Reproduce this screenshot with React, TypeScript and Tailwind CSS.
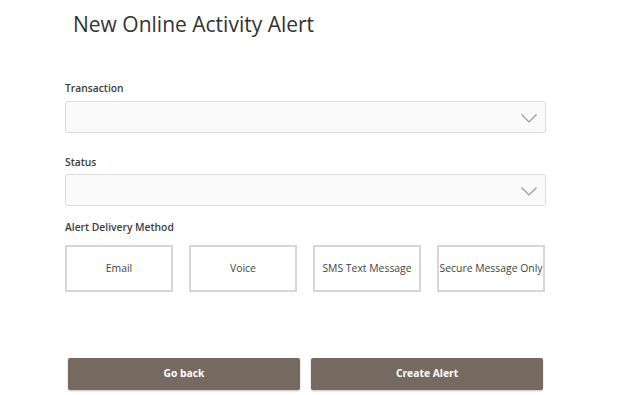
import React from "react";

const Chevron = () => (
  <svg width="16" height="9" viewBox="0 0 16 9" fill="none" className="absolute right-[8px] top-[12px]">
    <path d="M0.5 0.5 L8 8 L15.5 0.5" stroke="#9a9a9a" strokeWidth="1.2" />
  </svg>
);

const Select = () => (
  <div className="relative h-[32px] w-[481px] rounded-[3px] border border-[#dcdcdc] bg-[#fafafa]">
    <Chevron />
  </div>
);

export default function App() {
  const methods = ["Email", "Voice", "SMS Text Message", "Secure Message Only"];
  return (
    <div
      className="w-[624px] h-[395px] bg-white text-[#333]"
      style={{ fontFamily: '"Open Sans", sans-serif' }}
    >
      <div className="pl-[73px] pt-[10px] text-[21px] leading-[29px] text-[#333]">New Online Activity Alert</div>
      <div className="pl-[65px] pt-[42px] flex flex-col">
        <div className="text-[10.3px] font-semibold leading-[15px] text-[#3c3c3c]">Transaction</div>
        <div className="mt-[5px]">
          <Select />
        </div>
        <div className="mt-[22px] text-[10.3px] font-semibold leading-[15px] text-[#3c3c3c]">Status</div>
        <div className="mt-[4px]">
          <Select />
        </div>
        <div className="mt-[14px] text-[10.3px] font-semibold leading-[15px] text-[#3c3c3c]">Alert Delivery Method</div>
        <div className="mt-[10px] flex gap-[16px]">
          {methods.map((m) => (
            <div
              key={m}
              className="flex h-[47px] w-[108px] shrink-0 items-center justify-center whitespace-nowrap border-2 border-[#d6d6d6] bg-white text-[10.4px] text-[#444]"
            >
              {m}
            </div>
          ))}
        </div>
      </div>
      <div className="mt-[66px] flex gap-[11px] pl-[68px]">
        <button className="h-[32px] w-[232px] rounded-[2px] bg-[#766a60] text-[10.3px] font-bold text-white shadow-[0_1px_2px_rgba(0,0,0,0.25)]">
          Go back
        </button>
        <button className="h-[32px] w-[232px] rounded-[2px] bg-[#766a60] text-[10.3px] font-bold text-white shadow-[0_1px_2px_rgba(0,0,0,0.25)]">
          Create Alert
        </button>
      </div>
    </div>
  );
}
